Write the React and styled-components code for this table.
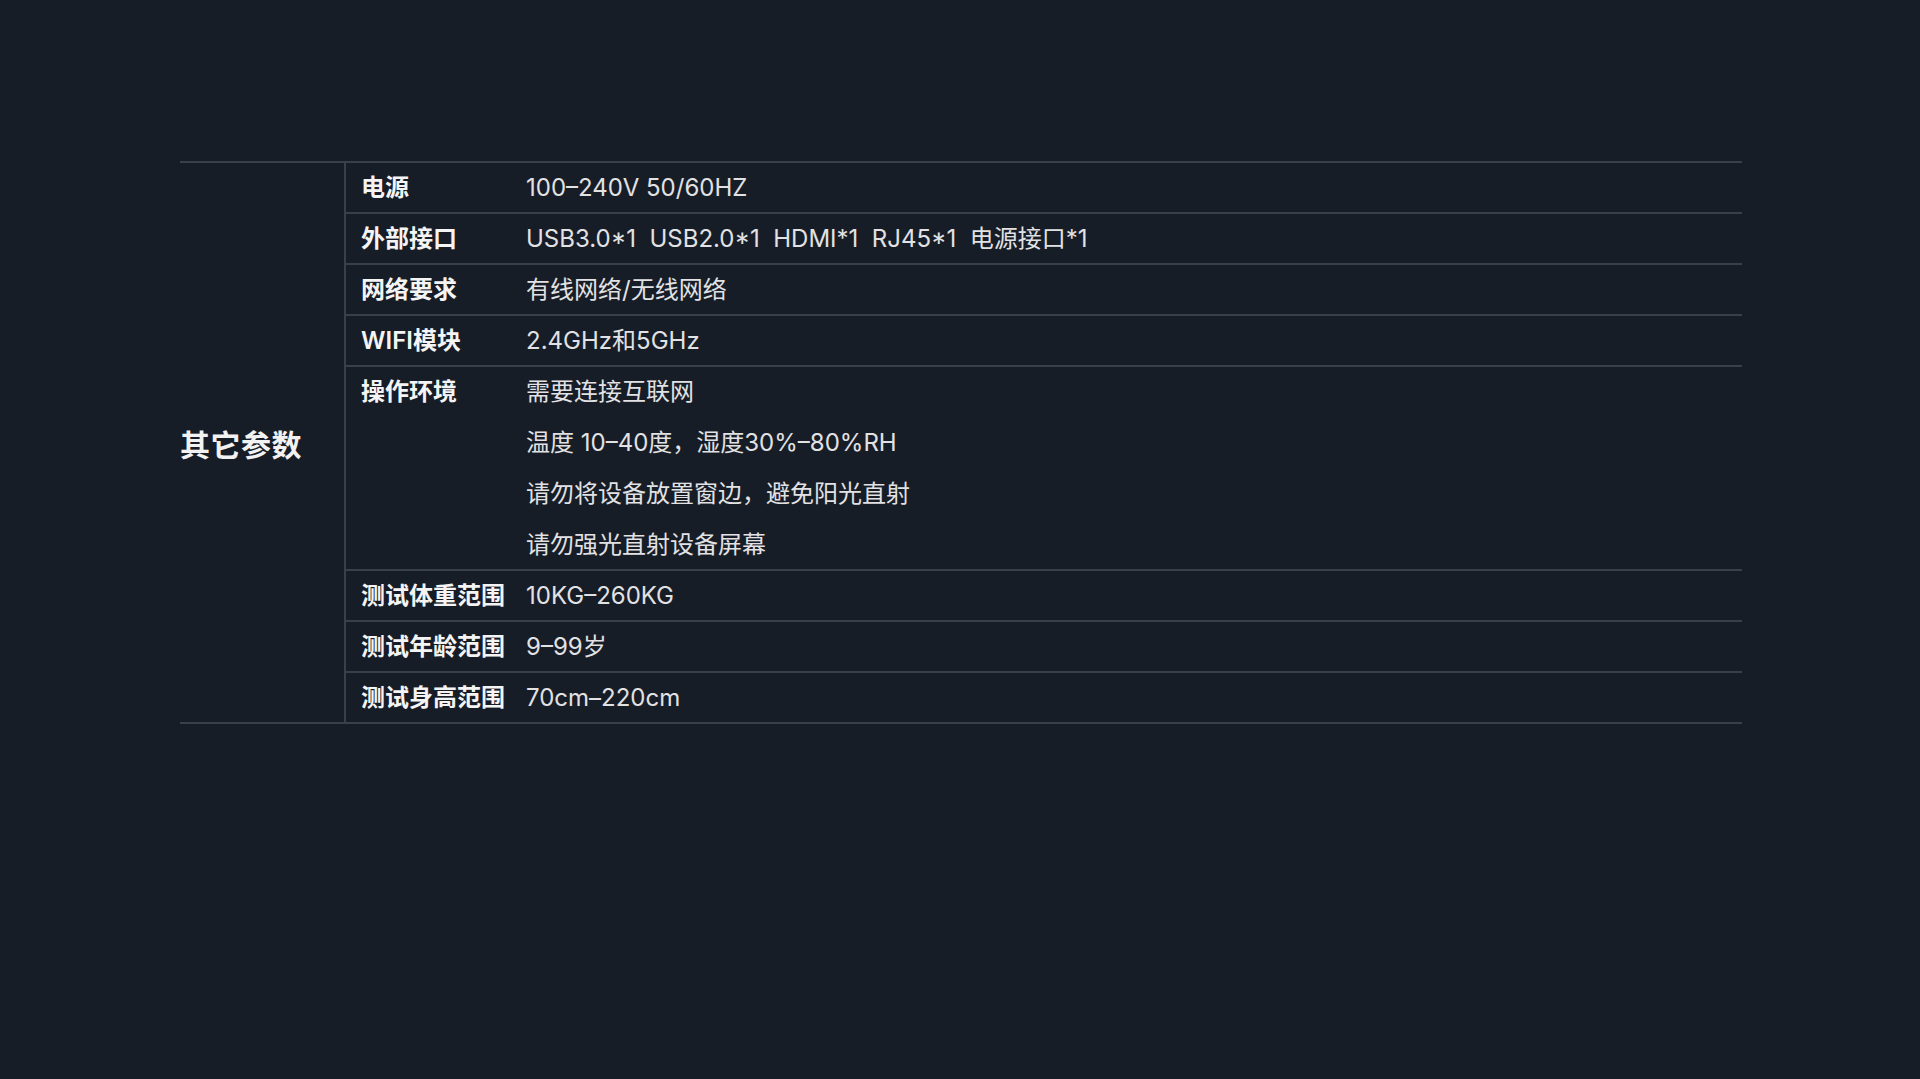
import React from "react";
import styled, { createGlobalStyle } from "styled-components";

const GlobalStyle = createGlobalStyle`
  html, body {
    margin: 0;
    padding: 0;
    background: #171d27;
  }
  body {
    font-family: Inter, "Noto Sans CJK SC", "Noto Sans", sans-serif;
    -webkit-font-smoothing: antialiased;
  }
`;

const Page = styled.div`
  min-height: 1079px;
  background: #171d27;
  padding: 161px 178px 0 180px;
  box-sizing: border-box;
`;

const Table = styled.div`
  display: flex;
  border-top: 2px solid #3a404a;
  border-bottom: 2px solid #3a404a;
`;

const Section = styled.div`
  width: 164px;
  flex: none;
  display: flex;
  align-items: center;
  border-right: 2px solid #3a404a;
  color: #f2f2f2;
  font-size: 30px;
  font-weight: 600;
  letter-spacing: 0.5px;
`;

const Rows = styled.div`
  flex: 1;
  display: flex;
  flex-direction: column;
`;

const Row = styled.div`
  display: grid;
  grid-template-columns: 180px 1fr;
  border-bottom: ${(p) => (p.$last ? "none" : "2px solid #3a404a")};
`;

const Label = styled.div`
  padding-left: 15px;
  height: 49px;
  line-height: 49px;
  color: #f4f4f4;
  font-size: 24px;
  font-weight: 600;
  white-space: nowrap;
`;

const Values = styled.div`
  display: flex;
  flex-direction: column;
  gap: 2px;
`;

const Value = styled.div`
  height: 49px;
  line-height: 49px;
  color: #e2e2e4;
  font-size: 24px;
  font-weight: 400;
  white-space: pre;
`;

const data = [
  { label: "电源", values: ["100–240V 50/60HZ"] },
  { label: "外部接口", values: ["USB3.0*1  USB2.0*1  HDMI*1  RJ45*1  电源接口*1"] },
  { label: "网络要求", values: ["有线网络/无线网络"] },
  { label: "WIFI模块", values: ["2.4GHz和5GHz"] },
  {
    label: "操作环境",
    values: [
      "需要连接互联网",
      "温度 10–40度，湿度30%–80%RH",
      "请勿将设备放置窗边，避免阳光直射",
      "请勿强光直射设备屏幕",
    ],
  },
  { label: "测试体重范围", values: ["10KG–260KG"] },
  { label: "测试年龄范围", values: ["9–99岁"] },
  { label: "测试身高范围", values: ["70cm–220cm"] },
];

export default function App() {
  return (
    <>
      <GlobalStyle />
      <Page>
        <Table>
          <Section>其它参数</Section>
          <Rows>
            {data.map((r, i) => (
              <Row key={r.label} $last={i === data.length - 1}>
                <Label>{r.label}</Label>
                <Values>
                  {r.values.map((v) => (
                    <Value key={v}>{v}</Value>
                  ))}
                </Values>
              </Row>
            ))}
          </Rows>
        </Table>
      </Page>
    </>
  );
}
